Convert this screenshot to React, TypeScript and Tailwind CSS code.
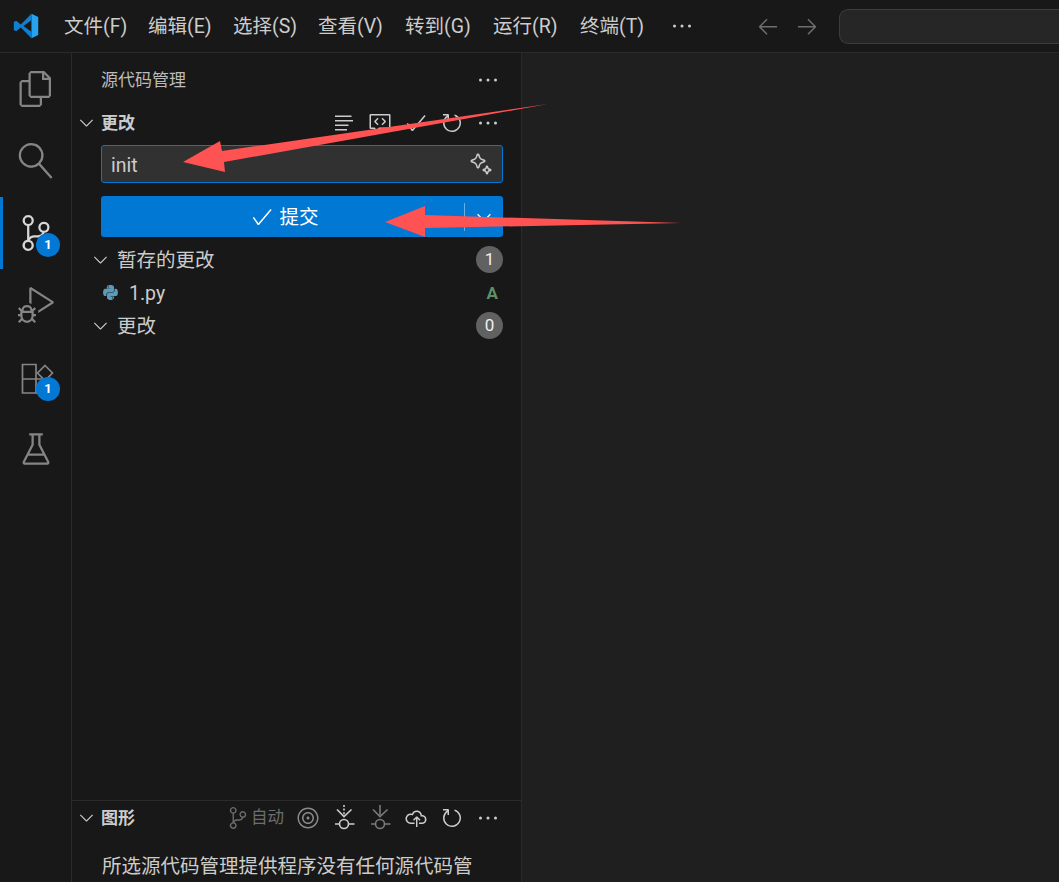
import React from "react";
import {
  VscFiles, VscSearch, VscSourceControl, VscDebugAlt, VscBeaker, VscEllipsis,
  VscChevronDown, VscCheck, VscRefresh, VscListFlat, VscSparkle, VscCloudUpload, VscArrowLeft,
  VscArrowRight, VscTarget, VscCodeReview,
} from "react-icons/vsc";
import { FaPython } from "react-icons/fa";

const font = { fontFamily: 'Roboto, "Noto Sans CJK SC", "Noto Sans", sans-serif' };

function Logo() {
  return (
    <svg width="26" height="26" viewBox="0 0 100 100">
      <path d="M71 3 L97 15 V85 L71 97 Z" fill="#27a2f2" />
      <path d="M71 3 L30 44 L12 30 L3 35 V65 L12 70 L30 56 L71 97 V72 L40 50 L71 28 Z" fill="#0f80d0" />
    </svg>
  );
}

function ExtensionsIcon() {
  return (
    <svg width="36" height="36" viewBox="0 0 36 36" fill="none" stroke="currentColor" strokeWidth="1.7">
      <path d="M4.5 5.5H18V34H4.5Z" />
      <path d="M4.5 20H32V34H18" />
      <path d="M27 6.5L34.5 14L27 21.5L19.5 14Z" />
    </svg>
  );
}

function IncomingIcon({ dotted }: { dotted?: boolean }) {
  return (
    <svg width="24" height="26" viewBox="0 0 24 26" fill="none" stroke="currentColor" strokeWidth="1.6">
      <path d="M12 0V10" strokeDasharray={dotted ? "2 1.6" : undefined} />
      <path d="M5 4.5L12 11.6L19.5 4.5" />
      <circle cx="12" cy="19" r="4.5" />
      <path d="M3 19H7.5M16.5 19H22.5" />
    </svg>
  );
}

function ActivityItem({ children, active, badge }: { children: React.ReactNode; active?: boolean; badge?: boolean }) {
  return (
    <div className={`relative flex h-[72px] w-full items-center justify-center ${active ? "text-[#d7d7d7]" : "text-[#858585]"}`}>
      {active && <div className="absolute left-0 top-0 h-full w-[3px] bg-[#0078d4]" />}
      {children}
      {badge && (
        <div className="absolute left-[36px] top-[36px] flex h-6 w-6 items-center justify-center rounded-full bg-[#0078d4] text-[13px] font-bold text-white">
          1
        </div>
      )}
    </div>
  );
}

function CountBadge({ n }: { n: number }) {
  return (
    <div className="flex h-[27px] w-[27px] items-center justify-center rounded-full bg-[#616161] text-[17px] text-[#f0f0f0]">{n}</div>
  );
}

function SectionRow({ label, n }: { label: string; n: number }) {
  return (
    <div className="flex h-[33px] items-center pl-[18px] pr-[18px] text-[19.5px] text-[#cccccc]">
      <VscChevronDown size={21} className="mr-[6px] text-[#cccccc]" />
      <span className="flex-1 pt-[3px]">{label}</span>
      <CountBadge n={n} />
    </div>
  );
}

export default function App() {
  return (
    <div className="relative flex h-[882px] w-[1059px] flex-col overflow-hidden bg-[#1f1f1f]" style={font}>
      <header className="flex h-[53px] shrink-0 items-center border-b border-[#2b2b2b] bg-[#181818] text-[19.5px] text-[#cccccc]">
        <div className="ml-[13px] mr-[25px] flex w-[26px] justify-center"><Logo /></div>
        <nav className="flex items-center gap-[24px] whitespace-nowrap pt-[1px] leading-none">
          <span className="w-[60px]">文件(F)</span>
          <span className="w-[61px]">编辑(E)</span>
          <span className="w-[61px]">选择(S)</span>
          <span className="w-[63px]">查看(V)</span>
          <span className="w-[64px]">转到(G)</span>
          <span className="w-[63px]">运行(R)</span>
          <span className="w-[61px]">终端(T)</span>
        </nav>
        <VscEllipsis size={24} className="ml-[29px] text-[#cccccc]" />
        <VscArrowLeft size={24} className="ml-[62px] text-[#6e6e6e]" />
        <VscArrowRight size={24} className="ml-[15px] text-[#6e6e6e]" />
        <div className="ml-[20px] h-[35px] flex-1 rounded-l-[9px] border border-r-0 border-[#3d3d3d] bg-[#262626]" />
      </header>
      <div className="flex min-h-0 flex-1">
        <aside className="flex w-[72px] shrink-0 flex-col border-r border-[#2b2b2b] bg-[#181818]">
          <ActivityItem><VscFiles size={36} /></ActivityItem>
          <ActivityItem><VscSearch size={36} className="-scale-x-100" /></ActivityItem>
          <ActivityItem active badge><VscSourceControl size={36} /></ActivityItem>
          <ActivityItem><VscDebugAlt size={36} /></ActivityItem>
          <ActivityItem badge><ExtensionsIcon /></ActivityItem>
          <ActivityItem><VscBeaker size={36} /></ActivityItem>
        </aside>
        <section className="flex w-[450px] shrink-0 flex-col border-r border-[#2b2b2b] bg-[#181818]">
          <div className="flex h-[53px] shrink-0 items-center pl-[29px] pr-[21px] text-[17px] text-[#bbbbbb]">
            <span className="flex-1 pt-[2px]">源代码管理</span>
            <VscEllipsis size={24} className="text-[#cccccc]" />
          </div>
          <div className="flex h-[33px] shrink-0 items-center pl-[4px] pr-[21px] text-[#cccccc]">
            <VscChevronDown size={21} className="mr-[4px]" />
            <span className="flex-1 pt-[2px] text-[17px] font-bold">更改</span>
            <div className="flex items-center gap-[12px]">
              <VscListFlat size={24} />
              <VscCodeReview size={24} />
              <VscCheck size={24} />
              <VscRefresh size={24} />
              <VscEllipsis size={24} />
            </div>
          </div>
          <div className="ml-[29px] mr-[18px] mt-[6px] flex h-[38px] items-center rounded-[3px] border border-[#0078d4] bg-[#313131] pl-[9px] pr-[9px] text-[19.5px] text-[#cccccc]">
            <span className="flex-1 pt-[4px]">init</span>
            <VscSparkle size={24} />
          </div>
          <div className="ml-[29px] mr-[18px] mt-[13px] flex h-[41px] items-center rounded-[3px] bg-[#0078d4] text-[19.5px] text-white">
            <div className="flex flex-1 items-center justify-center gap-[5px] pl-[4px]">
              <VscCheck size={24} />
              <span className="pt-[2px]">提交</span>
            </div>
            <div className="h-[28px] w-px bg-[#6aaee6]" />
            <div className="flex w-[38px] justify-center"><VscChevronDown size={22} /></div>
          </div>
          <div className="mt-[6px] flex flex-1 flex-col">
            <SectionRow label="暂存的更改" n={1} />
            <div className="flex h-[33px] items-center pl-[30px] pr-[23px] text-[19.5px] text-[#cccccc]">
              <FaPython size={17} className="mr-[10px] text-[#5a9cbd]" />
              <span className="flex-1 pt-[2px]">1.py</span>
              <span className="pt-[2px] text-[17px] font-bold text-[#5f8f66]">A</span>
            </div>
            <SectionRow label="更改" n={0} />
          </div>
          <div className="h-[82px] shrink-0 overflow-hidden border-t border-[#2b2b2b]">
            <div className="flex h-[33px] items-center pl-[4px] pr-[21px] text-[#cccccc]">
              <VscChevronDown size={21} className="mr-[4px]" />
              <span className="flex-1 pt-[2px] text-[17px] font-bold">图形</span>
              <div className="flex items-center gap-[12px]">
                <div className="flex items-center gap-[2px] text-[#6e6e6e]">
                  <VscSourceControl size={22} />
                  <span className="pt-[2px] text-[16.5px]">自动</span>
                </div>
                <VscTarget size={24} className="text-[#8a8a8a]" />
                <IncomingIcon dotted />
                <div className="text-[#7a7a7a]"><IncomingIcon /></div>
                <VscCloudUpload size={24} />
                <VscRefresh size={24} />
                <VscEllipsis size={24} />
              </div>
            </div>
            <p className="ml-[30px] mt-[18px] whitespace-nowrap text-[19.5px] leading-[30px] text-[#cccccc]">
              所选源代码管理提供程序没有任何源代码管
            </p>
          </div>
        </section>
        <main className="flex-1 bg-[#1f1f1f]" />
      </div>
      <svg className="pointer-events-none absolute left-0 top-0" width="1059" height="882">
        <polygon points="548,104 224,162 225,172 183,162 220,141 222,151" fill="#ff5252" />
        <polygon points="681,223 425,228 425,237 385,222 425,206 425,215" fill="#ff5252" />
      </svg>
    </div>
  );
}
